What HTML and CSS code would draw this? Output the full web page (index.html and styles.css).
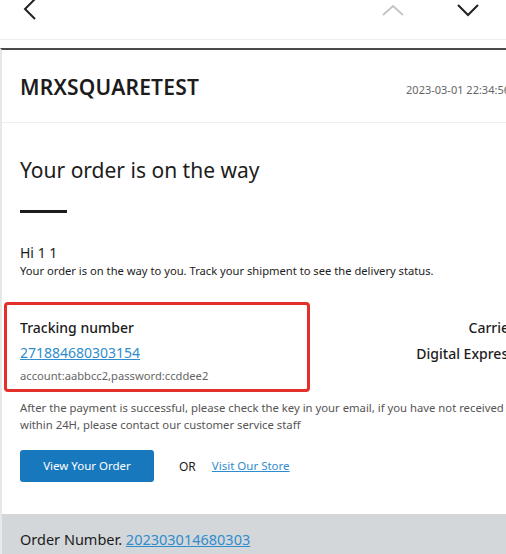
FILE: index.html
```html
<!DOCTYPE html>
<html>
    <head>
        <title>Order shipped</title>
        <link rel="stylesheet" href="styles.css">
    </head>
    <body>
        <div class="topbar">
            <svg class="icon back" width="16" height="24" viewBox="0 0 16 24">
                <path d="M13 1 L3 11 L13 21" fill="none" stroke="#222" stroke-width="2"/>
            </svg>
            <div class="nav">
                <svg class="icon" width="24" height="14" viewBox="0 0 24 14">
                    <path d="M2 12 L12 3 L22 12" fill="none" stroke="#c4c4c4" stroke-width="1.8"/>
                </svg>
                <svg class="icon" width="24" height="14" viewBox="0 0 24 14">
                    <path d="M2 2 L12 12 L22 2" fill="none" stroke="#222" stroke-width="2"/>
                </svg>
            </div>
        </div>

        <div class="mail">
            <div class="mail-head">
                <div class="sender">MRXSQUARETEST</div>
                <div class="date">2023-03-01 22:34:56</div>
            </div>

            <div class="mail-body">
                <h1 class="title">Your order is on the way</h1>
                <div class="rule"></div>

                <div class="greet">Hi 1 1</div>
                <div class="small">Your order is on the way to you. Track your shipment to see the delivery status.</div>

                <div class="tracking">
                    <div class="mark"></div>
                    <div class="col">
                        <div class="label">Tracking number</div>
                        <a class="link" href="#">271884680303154</a>
                        <div class="small muted">account:aabbcc2,password:ccddee2</div>
                    </div>
                    <div class="col right">
                        <div class="label">Carrier</div>
                        <div class="label">Digital Express</div>
                    </div>
                </div>

                <p class="note">After the payment is successful, please check the key in your email, if you have not received it within 24H, please contact our customer service staff</p>

                <div class="actions">
                    <a class="btn" href="#">View Your Order</a>
                    <span class="or">OR</span>
                    <a class="link store" href="#">Visit Our Store</a>
                </div>
            </div>

            <div class="order-bar">
                Order Number. <a class="link" href="#">202303014680303</a>
            </div>
        </div>
    </body>
</html>
```

FILE: styles.css
```css
body {
    margin: 0;
    width: 506px;
    height: 554px;
    overflow: hidden;
    background: #fff;
    font-family: "Noto Sans", "Liberation Sans", sans-serif;
    color: #1c1c1c;
}
.topbar {
    height: 40px;
    border-bottom: 1px solid #efefef;
    display: flex;
    align-items: flex-start;
    justify-content: space-between;
    padding: 0 26px 0 22px;
    box-sizing: border-box;
}
.back {
    margin-top: -2px;
}
.nav {
    display: flex;
    gap: 51px;
    margin-top: 3px;
}
.mail {
    margin-top: 8px;
    width: 560px;
    border-top: 2px solid #4a4a4a;
    border-left: 2px solid #e8e8e8;
}
.mail-head {
    display: flex;
    align-items: center;
    justify-content: space-between;
    height: 72px;
    padding: 0 52px 0 18px;
    border-bottom: 1px solid #eeeeee;
}
.sender {
    font-size: 21px;
    font-weight: 600;
    letter-spacing: 0.2px;
    padding-top: 2px;
}
.date {
    font-size: 11px;
    color: #666;
    padding-top: 6px;
}
.mail-body {
    padding: 32px 40px 32px 18px;
}
.title {
    margin: 0;
    font-size: 21px;
    font-weight: 400;
    line-height: 30px;
}
.rule {
    width: 47px;
    height: 3px;
    background: #1c1c1c;
    margin-top: 25px;
    margin-bottom: 31px;
}
.greet {
    font-size: 14px;
    line-height: 18px;
}
.small {
    font-size: 11.2px;
    line-height: 17px;
}
.muted {
    color: #666;
    margin-top: 3px;
}
.tracking {
    position: relative;
    display: flex;
    justify-content: space-between;
    margin-top: 36px;
}
.mark {
    position: absolute;
    left: -16px;
    top: -13px;
    width: 300px;
    height: 84px;
    border: 3px solid #e3302a;
    border-radius: 4px;
}
.label {
    font-size: 14px;
    font-weight: 500;
    line-height: 26px;
}
.right {
    text-align: right;
    margin-right: 7px;
}
.link {
    color: #2f8ccd;
    font-size: 14px;
    line-height: 22px;
}
.note {
    color: #555;
    font-size: 11.3px;
    line-height: 17px;
    margin: 15px 0 0;
}
.actions {
    display: flex;
    align-items: center;
    margin-top: 17px;
}
.btn {
    display: block;
    width: 134px;
    height: 32px;
    line-height: 32px;
    text-align: center;
    background: #1878bd;
    color: #fff;
    font-size: 11.5px;
    text-decoration: none;
    border-radius: 3px;
}
.or {
    font-size: 12px;
    margin-left: 25px;
    margin-right: 16px;
}
.store {
    font-size: 11.5px;
}
.order-bar {
    background: #d4d7da;
    padding: 14px 18px 20px;
    font-size: 14.5px;
    height: 60px;
}
.order-bar .link {
    font-size: 14.5px;
}
```
